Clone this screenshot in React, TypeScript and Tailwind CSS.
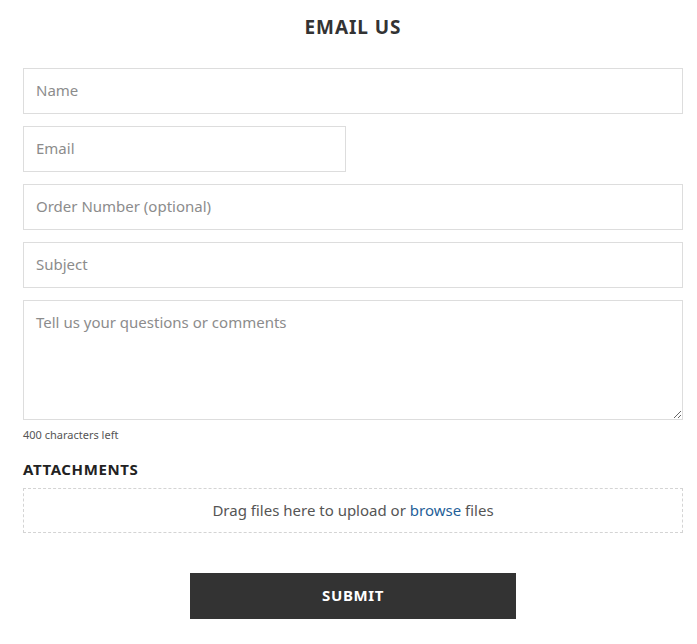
export default function App() {
  const font = { fontFamily: '"Noto Sans", "Open Sans", sans-serif' };
  const inputCls =
    "block h-[46px] border border-[#dddddd] bg-white px-[12px] pb-[2px] text-[15px] text-[#333] placeholder:text-[#8c8c8c] outline-none";
  return (
    <div className="w-[697px] bg-white pb-[25px]" style={font}>
      <div className="ml-[23px] w-[660px]">
        <h1 className="pt-[16px] text-center text-[19px] leading-[22px] font-bold tracking-[0.05em] text-[#333]">
          EMAIL US
        </h1>
        <form className="mt-[30px] flex w-[660px] flex-col">
          <input className={`${inputCls} w-[660px]`} placeholder="Name" />
          <input className={`${inputCls} mt-[12px] w-[323px]`} placeholder="Email" />
          <input className={`${inputCls} mt-[12px] w-[660px]`} placeholder="Order Number (optional)" />
          <input className={`${inputCls} mt-[12px] w-[660px]`} placeholder="Subject" />
          <textarea
            className="mt-[12px] block h-[120px] w-[660px] resize-y border border-[#dddddd] px-[12px] pt-[10px] text-[15px] leading-[22px] text-[#333] placeholder:text-[#8c8c8c] outline-none"
            placeholder="Tell us your questions or comments"
          />
          <div className="mt-[8px] text-[11px] leading-[14px] text-[#555]">400 characters left</div>
          <div className="mt-[18px] text-[15px] leading-[18px] font-bold tracking-[0.04em] text-[#222]">
            ATTACHMENTS
          </div>
          <div className="mt-[10px] flex h-[45px] items-center justify-center border border-dashed border-[#d4d4d4] pb-[1px] text-[15px] text-[#555]">
            <span>
              Drag files here to upload or <span className="text-[#1f5f99]">browse</span> files
            </span>
          </div>
          <div className="mt-[40px] flex justify-center">
            <button
              type="button"
              className="h-[46px] w-[326px] bg-[#333333] pb-[2px] text-[15px] font-bold tracking-[0.04em] text-white"
            >
              SUBMIT
            </button>
          </div>
        </form>
      </div>
    </div>
  );
}
